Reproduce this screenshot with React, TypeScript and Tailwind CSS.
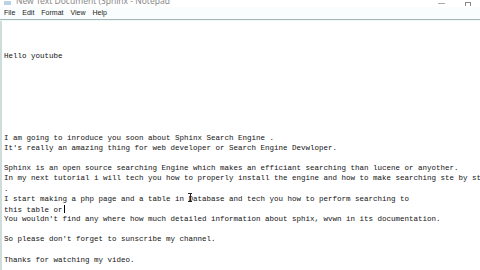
const menuItems = ["File", "Edit", "Format", "View", "Help"];

const lines = [
  "",
  "",
  "",
  "Hello youtube",
  "",
  "",
  "",
  "",
  "",
  "",
  "",
  "I am going to inroduce you soon about Sphinx Search Engine .",
  "It's really an amazing thing for web developer or Search Engine Devwloper.",
  "",
  "Sphinx is an open source searching Engine which makes an efficiant searching than lucene or anyother.",
  "In my next tutorial i will tech you how to properly install the engine and how to make searching ste by step",
  ".",
  "I start making a php page and a table in Database and tech you how to perform searching to",
  "this table or",
  "You wouldn't find any where how much detailed information about sphix, wvwn in its documentation.",
  "",
  "So please don't forget to sunscribe my channel.",
  "",
  "Thanks for watching my video.",
];

export default function App() {
  return (
    <div className="flex h-[270px] w-[480px] flex-col overflow-hidden bg-white">
      {/* title bar, mostly scrolled off the top */}
      <div className="flex h-[7px] items-end justify-between overflow-hidden bg-white px-[4px]">
        <div className="flex h-[7px] items-end gap-[5px] overflow-hidden">
          <span className="mb-[2px] h-[4px] w-[7px] shrink-0 bg-[#b9d3e3]" />
          <span className="block font-['Noto_Sans',sans-serif] text-[8.5px] leading-[12px] text-[#8a8a8a]">
            New Text Document (Sphinx - Notepad
          </span>
        </div>
        <div className="flex items-end gap-[20px] pr-[5px]">
          <span className="mb-[3px] h-px w-[7px] bg-[#aaa]" />
          <span className="mb-[1px] h-[4px] w-[6px] border border-b-0 border-[#888]" />
        </div>
      </div>

      {/* menu bar */}
      <div className="flex h-[12px] items-center gap-[7px] bg-[#fafdfd] px-[4px] font-['Liberation_Sans',sans-serif] text-[7px] text-[#222]">
        {menuItems.map((m) => (
          <span key={m}>{m}</span>
        ))}
      </div>
      <div className="h-px bg-[#a4b8b8]" />
      <div className="h-px bg-[#eef6f6]" />

      {/* edit area */}
      <div className="relative flex flex-1">
        <div className="w-[2px] bg-[#cfdcdc]" />
        <div className="flex-1 overflow-hidden pl-[2px] font-['Liberation_Mono',monospace] text-[7.5px] leading-[10.17px] text-[#141414]">
          {lines.map((l, i) => (
            <div key={i} className="h-[10.17px] whitespace-pre">
              {l}
              {l === "this table or" && (
                <span className="ml-px inline-block h-[8px] w-px translate-y-[1px] bg-black" />
              )}
            </div>
          ))}
        </div>
        {/* mouse I-beam */}
        <div className="absolute left-[188px] top-[172px] flex flex-col items-center">
          <span className="h-px w-[4px] bg-[#222]" />
          <span className="h-[7px] w-px bg-[#222]" />
          <span className="h-px w-[4px] bg-[#222]" />
        </div>
      </div>
    </div>
  );
}
